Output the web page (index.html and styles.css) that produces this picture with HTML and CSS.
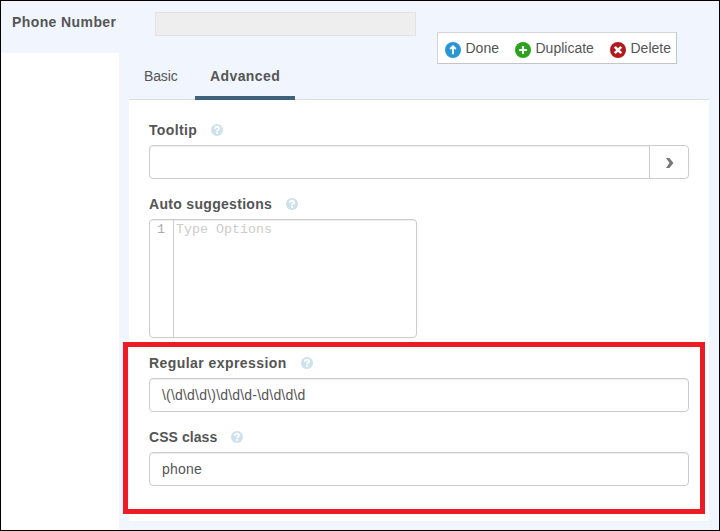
FILE: index.html
```
<!DOCTYPE html>
<html lang="en">
<head>
<meta charset="utf-8">
<title>Phone Number</title>
<link rel="stylesheet" href="styles.css">
</head>
<body>
<svg class="defs" width="0" height="0">
  <symbol id="help" viewBox="0 0 12 12"><circle cx="6" cy="6" r="6" fill="#cde2ec"/><path d="M3.9 4.7C4 2.2 8.1 2.2 8.1 4.5C8.1 5.8 6.1 5.8 6.1 7.2M6.1 8.1V9.9" fill="none" stroke="#fff" stroke-width="1.9"/></symbol>
</svg>
<div class="frame">
  <header class="question">
    <span class="name">Phone Number</span>
    <div class="preview"></div>
    <div class="toolbar">
      <a class="action done"><svg class="icon" viewBox="0 0 16 16"><circle cx="8" cy="8" r="8" fill="#2996d4"/><path d="M8 12.2V5M5.2 7L8 4.3L10.8 7" fill="none" stroke="#fff" stroke-width="1.9"/></svg><span>Done</span></a>
      <a class="action duplicate"><svg class="icon" viewBox="0 0 16 16"><circle cx="8" cy="8" r="8" fill="#2ca31e"/><path d="M8 4V12M4 8H12" stroke="#fff" stroke-width="2"/></svg><span>Duplicate</span></a>
      <a class="action"><svg class="icon" viewBox="0 0 16 16"><circle cx="8" cy="8" r="8" fill="#b51a1b"/><path d="M4.8 4.8L11.2 11.2M11.2 4.8L4.8 11.2" stroke="#fff" stroke-width="2.6"/></svg><span>Delete</span></a>
    </div>
  </header>
  <div class="body">
    <aside class="side"></aside>
    <main class="settings">
      <nav class="tabs"><a class="tab">Basic</a><a class="tab active">Advanced</a></nav>
      <section class="panel">
        <div class="field">
          <label class="label tooltip"><span>Tooltip</span><svg class="help"><use href="#help"/></svg></label>
          <div class="group"><div class="input"></div><button class="expand"><svg width="8" height="10" viewBox="0 0 8 10"><path d="M0 0H3.4L7.4 5L3.4 10H0L3.5 5Z" fill="#777"/></svg></button></div>
        </div>
        <div class="field">
          <label class="label suggestions"><span>Auto suggestions</span><svg class="help"><use href="#help"/></svg></label>
          <div class="editor"><div class="gutter">1</div><div class="code">Type Options</div></div>
        </div>
        <div class="field">
          <label class="label regex"><span>Regular expression</span><svg class="help"><use href="#help"/></svg></label>
          <div class="input">\(\d\d\d\)\d\d\d-\d\d\d\d</div>
        </div>
        <div class="field">
          <label class="label css-class"><span>CSS class</span><svg class="help"><use href="#help"/></svg></label>
          <div class="input">phone</div>
        </div>
      </section>
    </main>
  </div>
  <div class="highlight"></div>
</div>
</body>
</html>
```
FILE: styles.css
```
* { box-sizing: border-box; }
body { margin: 0; font: 14px/20px "Liberation Sans", Arial, sans-serif; color: #555; }
.defs { position: absolute; }
.frame { position: relative; width: 720px; height: 531px; border: 1px solid #000; background: #f1f6fe; display: flex; flex-direction: column; }
.question { height: 52px; flex: none; display: flex; align-items: flex-start; padding-left: 11px; }
.name { width: 143px; padding-top: 11px; font-weight: bold; letter-spacing: .4px; }
.preview { width: 261px; height: 24px; margin-top: 11px; background: #eee; border: 1px solid #e3e3e3; }
.toolbar { width: 240px; height: 32px; margin: 31px 0 0 21px; background: #fff; border: 1px solid #d5d5d5; border-right-color: #c4c4c4; border-bottom-color: #c4c4c4; display: flex; padding: 5px 0 0 7px; z-index: 1; }
.action { display: flex; gap: 4.5px; white-space: nowrap; }
.done { width: 70px; }
.duplicate { width: 95px; }
.icon { width: 16px; height: 16px; margin-top: 4px; }
.body { flex: 1; min-height: 0; display: flex; }
.side { width: 118px; background: #fff; }
.settings { flex: 1; padding: 0 10px; }
.tabs { height: 47px; display: flex; border-bottom: 1px solid #ddd; }
.tab { height: 47px; padding: 13px 15px 0; }
.tab:first-child { width: 66px; letter-spacing: -.15px; }
.active { width: 100px; font-weight: bold; border-bottom: 4px solid #40617e; letter-spacing: .4px; }
.panel { height: 421px; background: #fff; padding: 20px; display: flex; flex-direction: column; gap: 15px; }
.label { display: flex; gap: 14px; height: 20px; margin-bottom: 5px; align-items: center; font-weight: bold; }
.tooltip { letter-spacing: .36px; }
.suggestions { letter-spacing: .31px; }
.regex { letter-spacing: .44px; }
.css-class { letter-spacing: .06px; }
.help { width: 12px; height: 12px; }
.input { flex: 1; height: 34px; border: 1px solid #ccc; border-radius: 4px; padding: 6px 12px; background: #fff; box-shadow: inset 0 1px 1px rgba(0,0,0,.07); letter-spacing: .2px; }
.group { display: flex; }
.group .input { border-radius: 4px 0 0 4px; }
.expand { width: 40px; height: 34px; margin-left: -1px; border: 1px solid #ccc; border-radius: 0 4px 4px 0; background: #fff; padding: 2px 0 0 2px; display: flex; align-items: center; justify-content: center; }
.editor { width: 268px; height: 119px; display: flex; border: 1px solid #ccc; border-radius: 4px; box-shadow: inset 0 1px 1px rgba(0,0,0,.07); font: 13.33px/19px "Liberation Mono", monospace; }
.gutter { width: 24px; border-right: 1px solid #ccc; padding-left: 7px; color: #aaa; }
.code { padding-left: 2px; color: #ccc; }
.highlight { position: absolute; left: 122px; top: 341px; width: 582px; height: 172px; border: 5px solid #ed1c24; }
```
